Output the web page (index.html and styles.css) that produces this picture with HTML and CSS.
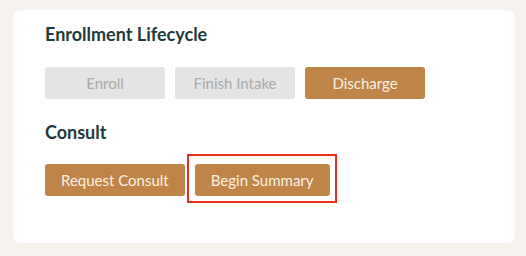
FILE: index.html
```html
<!DOCTYPE html>
<html lang="en">
<head>
    <meta charset="UTF-8">
    <meta name="viewport" content="width=device-width, initial-scale=1.0">
    <title>Enrollment Actions</title>
    <link rel="stylesheet" href="styles.css">
</head>
<body>
    <div class="card">
        <div class="section">
            <h2 class="section-title">Enrollment Lifecycle</h2>
            <div class="actions">
                <button class="btn" disabled>Enroll</button>
                <button class="btn" disabled>Finish Intake</button>
                <button class="btn">Discharge</button>
            </div>
        </div>

        <div class="section">
            <h2 class="section-title">Consult</h2>
            <div class="actions">
                <button class="btn">Request Consult</button>
                <button class="btn highlighted">Begin Summary</button>
            </div>
        </div>
    </div>
</body>
</html>
```

FILE: styles.css
```css
body {
    margin: 0;
    padding: 10px 11px 0 13px;
    background: #f6f3ee;
    font-family: Lato, "Open Sans", sans-serif;
}

.card {
    height: 233px;
    box-sizing: border-box;
    padding: 14px 32px 0;
    background: #fff;
    border-radius: 8px;
    display: flex;
    flex-direction: column;
    gap: 23px;
}

.section-title {
    margin: 0 0 21px;
    font-size: 18px;
    font-weight: 700;
    line-height: 21.6px;
    color: #1f3a3a;
}

.actions {
    display: flex;
    gap: 10px;
}

.btn {
    height: 32px;
    min-width: 120px;
    padding: 0 16px;
    border: none;
    border-radius: 3px;
    background: #bf8548;
    color: #fcf1e2;
    font-family: inherit;
    font-size: 15px;
    cursor: pointer;
}

.btn:disabled {
    background: #e4e4e4;
    color: #ababab;
    cursor: default;
}

/* red annotation box around the button */
.highlighted {
    position: relative;
}

.highlighted::after {
    content: "";
    position: absolute;
    top: -10px;
    right: -7px;
    bottom: -7px;
    left: -8px;
    border: 2px solid #ea301c;
}
```
